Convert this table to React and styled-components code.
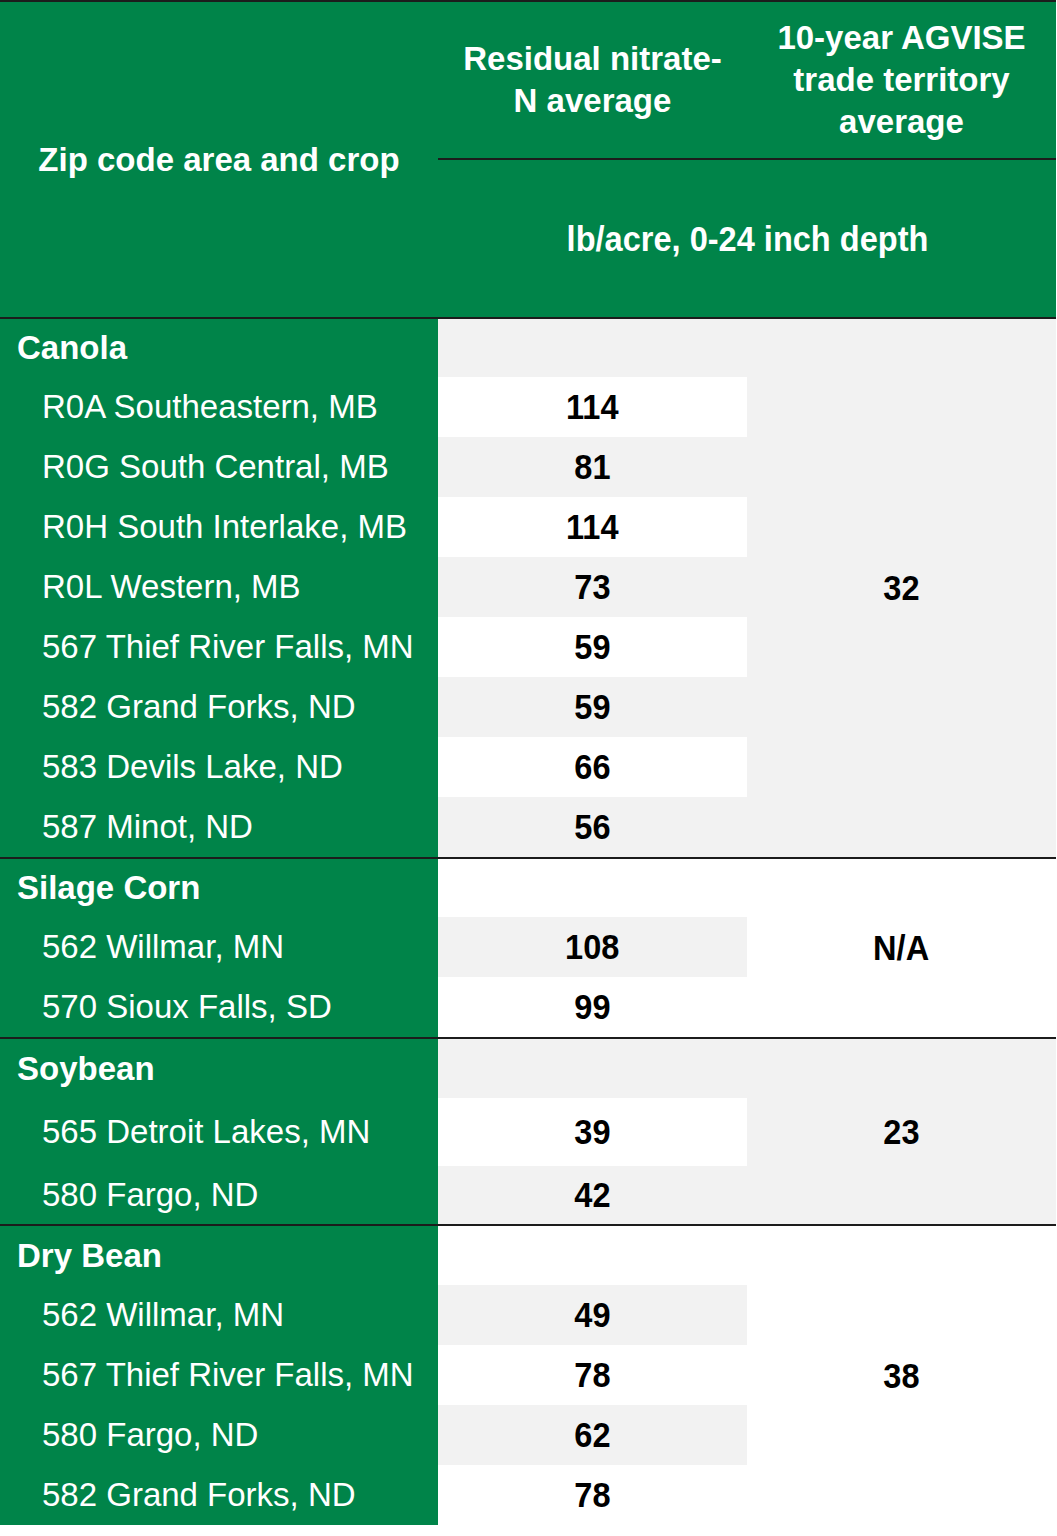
import React from "react";
import styled, { createGlobalStyle } from "styled-components";

const GREEN = "#008449";
const GRAY = "#f2f2f2";
const LINE = "#1c1c1c";

const GlobalStyle = createGlobalStyle`
  body {
    margin: 0;
    background: #fff;
  }
`;

const Page = styled.div`
  width: 1056px;
  font-family: "Liberation Sans", Arial, sans-serif;
  border-top: 2px solid ${LINE};
`;

const Header = styled.div`
  display: grid;
  grid-template-columns: 438px 309px 309px;
  grid-template-rows: 158px 157px;
  background: ${GREEN};
  color: #fff;
  font-weight: bold;
`;

const ZipHead = styled.div`
  grid-row: 1 / span 2;
  display: flex;
  align-items: center;
  justify-content: center;
  font-size: 33px;
`;

const ColHead = styled.div`
  display: flex;
  align-items: center;
  justify-content: center;
  text-align: center;
  font-size: 33px;
  line-height: 42px;
  border-bottom: 2px solid ${LINE};
`;

const UnitHead = styled.div`
  grid-column: 2 / span 2;
  display: flex;
  align-items: center;
  justify-content: center;
  font-size: 35px;
`;

// no narrow face installed: squeeze the bold face a little
const Narrow = styled.span`
  display: inline-block;
  font-family: "Liberation Sans Narrow", "Arial Narrow", "Liberation Sans", sans-serif;
  font-weight: bold;
  transform: scaleX(0.93);
`;

const Section = styled.div`
  display: grid;
  grid-template-columns: 438px 309px 309px;
  grid-template-rows: ${({ $rows }) => $rows};
  border-top: 2px solid ${LINE};
`;

const Crop = styled.div`
  background: ${GREEN};
  color: #fff;
  font-weight: bold;
  font-size: 33px;
  display: flex;
  align-items: center;
  padding-left: 17px;
`;

const Place = styled.div`
  background: ${GREEN};
  color: #fff;
  font-size: 33px;
  display: flex;
  align-items: center;
  padding-left: 42px;
  white-space: nowrap;
`;

const Value = styled.div`
  background: ${({ $shade }) => ($shade ? GRAY : "#fff")};
  color: #000;
  display: flex;
  align-items: center;
  justify-content: center;
  font-size: 35px;
`;

const Average = styled(Value)`
  grid-column: 3;
  grid-row: 1 / -1;
`;

const sections = [
  {
    crop: "Canola",
    avg: "32",
    rows: "58px repeat(8, 60px)",
    items: [
      ["R0A Southeastern, MB", "114"],
      ["R0G South Central, MB", "81"],
      ["R0H South Interlake, MB", "114"],
      ["R0L Western, MB", "73"],
      ["567 Thief River Falls, MN", "59"],
      ["582 Grand Forks, ND", "59"],
      ["583 Devils Lake, ND", "66"],
      ["587 Minot, ND", "56"],
    ],
  },
  {
    crop: "Silage Corn",
    avg: "N/A",
    rows: "58px 60px 60px",
    items: [
      ["562 Willmar, MN", "108"],
      ["570 Sioux Falls, SD", "99"],
    ],
  },
  {
    crop: "Soybean",
    avg: "23",
    rows: "59px 68px 58px",
    items: [
      ["565 Detroit Lakes, MN", "39"],
      ["580 Fargo, ND", "42"],
    ],
  },
  {
    crop: "Dry Bean",
    avg: "38",
    rows: "59px repeat(4, 60px)",
    items: [
      ["562 Willmar, MN", "49"],
      ["567 Thief River Falls, MN", "78"],
      ["580 Fargo, ND", "62"],
      ["582 Grand Forks, ND", "78"],
    ],
  },
];

export default function App() {
  return (
    <>
      <GlobalStyle />
      <Page>
        <Header>
          <ZipHead>Zip code area and crop</ZipHead>
          <ColHead>
            Residual nitrate-
            <br />N average
          </ColHead>
          <ColHead>
            10-year AGVISE
            <br />
            trade territory
            <br />
            average
          </ColHead>
          <UnitHead>
            <Narrow>lb/acre, 0-24 inch depth</Narrow>
          </UnitHead>
        </Header>
        {sections.map((s, si) => {
          const start = si % 2 === 0;
          return (
            <Section key={s.crop} $rows={s.rows}>
              <Average $shade={start}>
                <Narrow>{s.avg}</Narrow>
              </Average>
              <Crop>{s.crop}</Crop>
              <Value $shade={start} />
              {s.items.map(([place, val], i) => (
                <React.Fragment key={place}>
                  <Place>{place}</Place>
                  <Value $shade={(i % 2 === 1) === start}>
                    <Narrow>{val}</Narrow>
                  </Value>
                </React.Fragment>
              ))}
            </Section>
          );
        })}
      </Page>
    </>
  );
}
